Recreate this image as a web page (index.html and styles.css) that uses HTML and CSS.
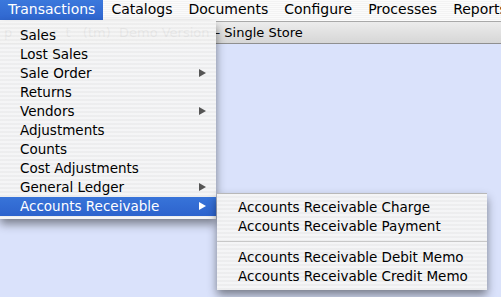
FILE: index.html
```html
<!DOCTYPE html>
<html lang="en">
   <head>
      <meta charset="UTF-8" />
      <title>Transactions menu</title>
      <link rel="stylesheet" href="styles.css">
   </head>
   <body>
      <nav class="menubar">
         <div class="menubar-item active">Transactions</div>
         <div class="menubar-item">Catalogs</div>
         <div class="menubar-item">Documents</div>
         <div class="menubar-item">Configure</div>
         <div class="menubar-item">Processes</div>
         <div class="menubar-item">Reports</div>
      </nav>
      <div class="window">
         <div class="titlebar">
            <span class="title"><span class="spaced">peart</span> (tm)&nbsp; Demo Version – Single Store</span>
         </div>
         <div class="content"></div>
      </div>

      <ul class="menu main-menu">
         <li>Sales</li>
         <li>Lost Sales</li>
         <li class="has-sub">Sale Order</li>
         <li>Returns</li>
         <li class="has-sub">Vendors</li>
         <li>Adjustments</li>
         <li>Counts</li>
         <li>Cost Adjustments</li>
         <li class="has-sub">General Ledger</li>
         <li class="has-sub selected">Accounts Receivable</li>
      </ul>

      <ul class="menu sub-menu">
         <li>Accounts Receivable Charge</li>
         <li>Accounts Receivable Payment</li>
         <li class="separator"></li>
         <li>Accounts Receivable Debit Memo</li>
         <li>Accounts Receivable Credit Memo</li>
      </ul>
   </body>
</html>
```
FILE: styles.css
```css
body {
   margin: 0;
   padding: 0;
   width: 501px;
   height: 297px;
   overflow: hidden;
   font-family: 'DejaVu Sans', sans-serif;
   color: #000;
   background-color: #dae2fb;
}

/* top menu bar */
nav.menubar {
   display: flex;
   align-items: flex-start;
   height: 21px;
   background: repeating-linear-gradient(#fbfbfb 0, #fbfbfb 1px, #f3f3f3 1px, #f3f3f3 2px);
   font-size: 14px;
   white-space: nowrap;
   overflow: hidden;
}

div.menubar-item {
   height: 20px;
   line-height: 19px;
   padding: 0 8px;
}

div.menubar-item.active {
   background: linear-gradient(#3b78dc, #2f66cf);
   color: #fff;
}

/* window behind the menus */
div.titlebar {
   height: 21px;
   border-top: 1px solid #a9a9a9;
   border-bottom: 1px solid #8f8f8f;
   background: linear-gradient(#ececec, #d6d6d6);
   font-size: 13px;
   line-height: 21px;
   white-space: nowrap;
   overflow: hidden;
}

span.title {
   padding-left: 4px;
}

span.spaced {
   letter-spacing: 8px;
}

div.content {
   height: 253px;
   background-color: #dae2fb;
}

/* drop down menus */
ul.menu {
   position: absolute;
   margin: 0;
   list-style: none;
   background: repeating-linear-gradient(rgba(246, 246, 246, 0.95) 0, rgba(246, 246, 246, 0.95) 2px, rgba(238, 238, 238, 0.95) 2px, rgba(238, 238, 238, 0.95) 4px);
   box-shadow: 0 5px 9px rgba(0, 0, 0, 0.45);
   font-size: 13.5px;
   white-space: nowrap;
}

ul.main-menu {
   left: 0;
   top: 21px;
   width: 216px;
   padding: 5px 0 3px;
}

ul.sub-menu {
   left: 217px;
   top: 193px;
   width: 270px;
   padding: 4px 0;
   border-top: 1px solid #b8b8b8;
   z-index: 2;
}

ul.menu li {
   position: relative;
   height: 19px;
   line-height: 19px;
   padding-left: 20px;
}

ul.sub-menu li {
   padding-left: 21px;
}

ul.menu li.has-sub::after {
   content: '';
   position: absolute;
   right: 10px;
   top: 5px;
   border-top: 4.5px solid transparent;
   border-bottom: 4.5px solid transparent;
   border-left: 7px solid #555;
}

ul.menu li.selected {
   background: linear-gradient(#3874d9, #2d63cd);
   color: #fff;
}

ul.menu li.selected::after {
   border-left-color: #fff;
}

ul.menu li.separator {
   height: 12px;
   padding: 0;
}

ul.menu li.separator::before {
   content: '';
   position: absolute;
   left: 0;
   right: 0;
   top: 5px;
   border-top: 1px solid #c8c8c8;
}
```
